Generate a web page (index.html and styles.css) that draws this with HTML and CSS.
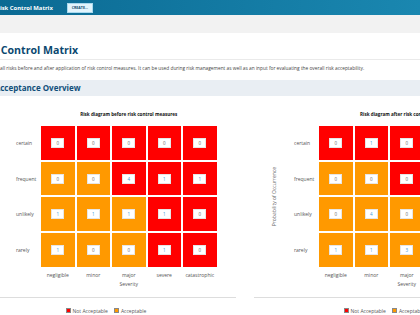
FILE: index.html
```html
<!DOCTYPE html>
<html lang="en">
<head>
  <meta charset="UTF-8" />
  <title>Risk Control Matrix</title>
  <link rel="stylesheet" href="styles.css">
</head>
<body>
  <header class="topbar">
    <span class="app-name">Risk Control Matrix</span>
    <button class="btn-create">CREATE...</button>
  </header>
  <div class="toolbar"></div>

  <main class="content">
    <div class="page-head">
      <h1>Risk Control Matrix</h1>
    </div>
    <p class="intro">all risks before and after application of risk control measures. It can be used during risk management as well as an input for evaluating the overall risk acceptability.</p>

    <h2 class="section-head">Risk Acceptance Overview</h2>

    <div class="charts">
      <section class="chart">
        <div class="chart-body">
          <div class="chart-title">Risk diagram before risk control measures</div>
          <div class="plot">
            <div class="y-axis"><span>Probability of Occurrence</span></div>
            <div class="row-labels">
              <span>certain</span>
              <span>frequent</span>
              <span>unlikely</span>
              <span>rarely</span>
            </div>
            <div class="cells">
              <div class="cell red"><span class="count">0</span></div>
              <div class="cell red"><span class="count">0</span></div>
              <div class="cell red"><span class="count">0</span></div>
              <div class="cell red"><span class="count">0</span></div>
              <div class="cell red"><span class="count">0</span></div>

              <div class="cell orange"><span class="count">0</span></div>
              <div class="cell orange"><span class="count">0</span></div>
              <div class="cell red"><span class="count link">4</span></div>
              <div class="cell red"><span class="count link">1</span></div>
              <div class="cell red"><span class="count link">1</span></div>

              <div class="cell orange"><span class="count link">1</span></div>
              <div class="cell orange"><span class="count link">1</span></div>
              <div class="cell orange"><span class="count link">1</span></div>
              <div class="cell red"><span class="count link">1</span></div>
              <div class="cell red"><span class="count">0</span></div>

              <div class="cell orange"><span class="count link">1</span></div>
              <div class="cell orange"><span class="count">0</span></div>
              <div class="cell orange"><span class="count">0</span></div>
              <div class="cell red"><span class="count link">1</span></div>
              <div class="cell red"><span class="count">0</span></div>
            </div>
          </div>
          <div class="col-labels">
            <span>negligible</span>
            <span>minor</span>
            <span>major</span>
            <span>severe</span>
            <span>catastrophic</span>
          </div>
          <div class="x-axis">Severity</div>
        </div>
        <div class="legend">
          <span class="key"><i class="swatch red"></i>Not Acceptable</span>
          <span class="key"><i class="swatch orange"></i>Acceptable</span>
        </div>
      </section>

      <section class="chart">
        <div class="chart-body">
          <div class="chart-title">Risk diagram after risk control measures</div>
          <div class="plot">
            <div class="y-axis"><span>Probability of Occurrence</span></div>
            <div class="row-labels">
              <span>certain</span>
              <span>frequent</span>
              <span>unlikely</span>
              <span>rarely</span>
            </div>
            <div class="cells">
              <div class="cell red"><span class="count">0</span></div>
              <div class="cell red"><span class="count link">1</span></div>
              <div class="cell red"><span class="count">0</span></div>
              <div class="cell red"><span class="count">0</span></div>
              <div class="cell red"><span class="count">0</span></div>

              <div class="cell orange"><span class="count">0</span></div>
              <div class="cell orange"><span class="count">0</span></div>
              <div class="cell red"><span class="count">0</span></div>
              <div class="cell red"><span class="count">0</span></div>
              <div class="cell red"><span class="count">0</span></div>

              <div class="cell orange"><span class="count">0</span></div>
              <div class="cell orange"><span class="count link">4</span></div>
              <div class="cell orange"><span class="count">0</span></div>
              <div class="cell red"><span class="count">0</span></div>
              <div class="cell red"><span class="count">0</span></div>

              <div class="cell orange"><span class="count link">1</span></div>
              <div class="cell orange"><span class="count link">1</span></div>
              <div class="cell orange"><span class="count link">3</span></div>
              <div class="cell red"><span class="count">0</span></div>
              <div class="cell red"><span class="count">0</span></div>
            </div>
          </div>
          <div class="col-labels">
            <span>negligible</span>
            <span>minor</span>
            <span>major</span>
            <span>severe</span>
            <span>catastrophic</span>
          </div>
          <div class="x-axis">Severity</div>
        </div>
        <div class="legend">
          <span class="key"><i class="swatch red"></i>Not Acceptable</span>
          <span class="key"><i class="swatch orange"></i>Acceptable</span>
        </div>
      </section>
    </div>
  </main>
</body>
</html>
```

FILE: styles.css
```css
body {
  margin: 0;
  width: 420px;
  height: 315px;
  overflow: hidden;
  background: #fff;
  font-family: "Open Sans", Arial, sans-serif;
  color: #333;
}

.topbar {
  height: 15px;
  display: flex;
  align-items: center;
  background: linear-gradient(90deg, #0b6a93, #1a87b0);
}

.app-name {
  margin-left: -4px;
  color: #fff;
  font-weight: bold;
  font-size: 5.9px;
  white-space: nowrap;
}

.btn-create {
  margin-left: 14px;
  width: 26px;
  height: 10px;
  padding: 0;
  border: 1px solid #a9d9ee;
  background: #e2f4fc;
  color: #0c4a6e;
  font-family: inherit;
  font-size: 3.6px;
  font-weight: bold;
}

.toolbar {
  height: 18px;
  background: #f2f2f2;
}

.content {
  margin-left: -24px;
  width: 540px;
}

.page-head {
  margin-top: 11px;
  padding-bottom: 3px;
  border-bottom: 1px solid #eaeaea;
}

.page-head h1 {
  margin: 0;
  font-size: 10.6px;
  line-height: 12px;
  color: #0b4870;
  white-space: nowrap;
}

.intro {
  margin: 5px 0 0 24px;
  font-size: 4.8px;
  line-height: 6px;
  color: #444;
  white-space: nowrap;
}

.section-head {
  margin: 9px 0 0;
  height: 16px;
  line-height: 16px;
  background: #e9eef3;
  font-size: 8px;
  color: #104e7a;
  white-space: nowrap;
}

.charts {
  display: flex;
  gap: 18px;
}

.chart {
  flex: 0 0 260px;
}

.chart-body {
  padding: 15px 0 10px;
  border-bottom: 1px solid #dddddd;
}

.chart-title,
.col-labels,
.x-axis {
  margin-left: 65px;
  width: 175.5px;
  text-align: center;
  white-space: nowrap;
}

.chart-title {
  font-size: 4.6px;
  line-height: 6px;
  font-weight: bold;
  color: #111;
}

.plot {
  display: flex;
  margin-top: 9px;
}

.y-axis {
  width: 40px;
  display: flex;
  justify-content: center;
  align-items: center;
}

.y-axis span {
  writing-mode: vertical-rl;
  transform: rotate(180deg);
  font-size: 5px;
  color: #666;
  white-space: nowrap;
}

.row-labels {
  width: 25px;
  display: grid;
  grid-template-rows: repeat(4, 33.7px);
  row-gap: 2px;
  align-items: center;
  font-size: 5px;
  color: #555;
}

.cells {
  display: grid;
  grid-template-columns: repeat(5, 33.5px);
  grid-template-rows: repeat(4, 33.7px);
  gap: 2px;
}

.cell {
  display: flex;
  align-items: center;
  justify-content: center;
}

.red {
  background: #ff0000;
}

.orange {
  background: #ff9900;
}

.count {
  width: 13px;
  height: 10px;
  box-sizing: border-box;
  border: 1px solid #e6e6e6;
  background: #fff;
  font-size: 4.5px;
  line-height: 8px;
  text-align: center;
  color: #666;
}

.count.link {
  color: #3b9ad9;
}

.col-labels {
  display: grid;
  grid-template-columns: repeat(5, 33.5px);
  column-gap: 2px;
  margin-top: 5px;
  font-size: 5px;
  line-height: 6px;
  color: #555;
}

.x-axis {
  margin-top: 3px;
  font-size: 5px;
  line-height: 6px;
  color: #555;
}

.legend {
  display: flex;
  justify-content: center;
  gap: 6px;
  padding-top: 10px;
  font-size: 5px;
  line-height: 6px;
  color: #555;
}

.key {
  display: flex;
  align-items: center;
  gap: 2px;
}

.swatch {
  width: 5px;
  height: 5px;
  box-sizing: border-box;
  border: 1px solid #888;
}
```
